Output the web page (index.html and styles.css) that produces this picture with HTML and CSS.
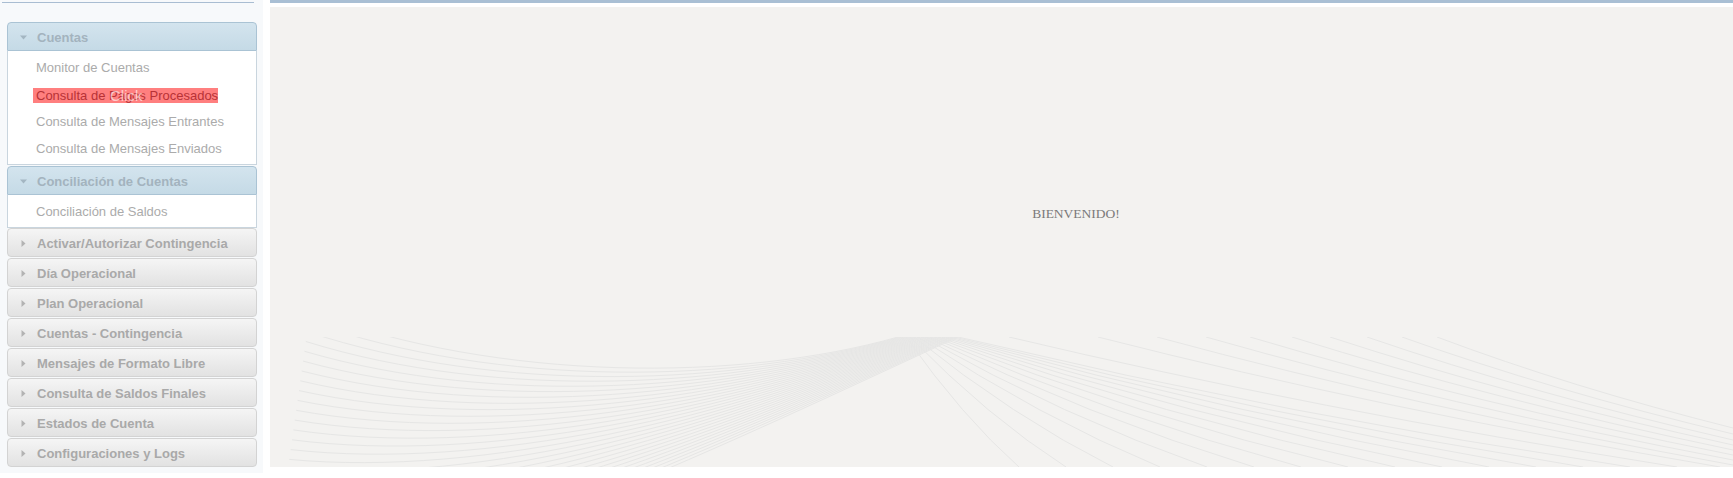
FILE: index.html
```html
<!DOCTYPE html>
<html lang="es">
<head>
<meta charset="utf-8">
<title>Bienvenido</title>
<link rel="stylesheet" href="styles.css">
</head>
<body>
<div class="page">
  <aside class="sidebar">
    <div class="top-rule"></div>
    <div class="accordion">
      <div class="acc-header active">
        <svg class="tri" width="7" height="7" viewBox="0 0 7 7"><polygon points="0,1.5 7,1.5 3.5,5.5"/></svg>
        <span>Cuentas</span>
      </div>
      <div class="acc-content">
        <div class="item">Monitor de Cuentas</div>
        <div class="item"><span class="hl">Consulta de Pagos Procesados<span class="click-tag">Click</span></span></div>
        <div class="item">Consulta de Mensajes Entrantes</div>
        <div class="item">Consulta de Mensajes Enviados</div>
      </div>
      <div class="acc-header active sep">
        <svg class="tri" width="7" height="7" viewBox="0 0 7 7"><polygon points="0,1.5 7,1.5 3.5,5.5"/></svg>
        <span>Conciliación de Cuentas</span>
      </div>
      <div class="acc-content">
        <div class="item">Conciliación de Saldos</div>
      </div>
      <div class="acc-header"><svg class="tri" width="7" height="7" viewBox="0 0 7 7"><polygon points="1.5,0 5.5,3.5 1.5,7"/></svg><span>Activar/Autorizar Contingencia</span></div>
      <div class="acc-header sep"><svg class="tri" width="7" height="7" viewBox="0 0 7 7"><polygon points="1.5,0 5.5,3.5 1.5,7"/></svg><span>Día Operacional</span></div>
      <div class="acc-header sep"><svg class="tri" width="7" height="7" viewBox="0 0 7 7"><polygon points="1.5,0 5.5,3.5 1.5,7"/></svg><span>Plan Operacional</span></div>
      <div class="acc-header sep"><svg class="tri" width="7" height="7" viewBox="0 0 7 7"><polygon points="1.5,0 5.5,3.5 1.5,7"/></svg><span>Cuentas - Contingencia</span></div>
      <div class="acc-header sep"><svg class="tri" width="7" height="7" viewBox="0 0 7 7"><polygon points="1.5,0 5.5,3.5 1.5,7"/></svg><span>Mensajes de Formato Libre</span></div>
      <div class="acc-header sep"><svg class="tri" width="7" height="7" viewBox="0 0 7 7"><polygon points="1.5,0 5.5,3.5 1.5,7"/></svg><span>Consulta de Saldos Finales</span></div>
      <div class="acc-header sep"><svg class="tri" width="7" height="7" viewBox="0 0 7 7"><polygon points="1.5,0 5.5,3.5 1.5,7"/></svg><span>Estados de Cuenta</span></div>
      <div class="acc-header sep"><svg class="tri" width="7" height="7" viewBox="0 0 7 7"><polygon points="1.5,0 5.5,3.5 1.5,7"/></svg><span>Configuraciones y Logs</span></div>
    </div>
  </aside>

  <main class="main">
    <div class="canvas">
      <div class="welcome">BIENVENIDO!</div>
      <svg class="wave" viewBox="0 0 1463 130" preserveAspectRatio="none">
        <g class="lines">
          <path d="M40,-25 C230,45 470,45 628,0"/>
          <path d="M38.6,-15.2 C229,51.4 469.3,47.2 630.1,0"/>
          <path d="M37.2,-5.3 C227.9,57.8 468.6,49.5 632.1,0"/>
          <path d="M35.9,4.5 C226.9,64.1 467.9,51.7 634.2,0"/>
          <path d="M34.5,14.3 C225.9,70.5 467.2,54 636.3,0"/>
          <path d="M33.1,24.1 C224.8,76.9 466.6,56.2 638.3,0"/>
          <path d="M31.7,34 C223.8,83.3 465.9,58.4 640.4,0"/>
          <path d="M30.3,43.8 C222.8,89.7 465.2,60.7 642.5,0"/>
          <path d="M29,53.6 C221.7,96 464.5,62.9 644.6,0"/>
          <path d="M27.6,63.4 C220.7,102.4 463.8,65.2 646.6,0"/>
          <path d="M26.2,73.3 C219.7,108.8 463.1,67.4 648.7,0"/>
          <path d="M24.8,83.1 C218.6,115.2 462.4,69.7 650.8,0"/>
          <path d="M23.4,92.9 C217.6,121.6 461.7,71.9 652.8,0"/>
          <path d="M22.1,102.8 C216.6,127.9 461,74.1 654.9,0"/>
          <path d="M20.7,112.6 C215.5,134.3 460.3,76.4 657,0"/>
          <path d="M19.3,122.4 C214.5,140.7 459.7,78.6 659,0"/>
          <path d="M17.9,132.2 C213.4,147.1 459,80.9 661.1,0"/>
          <path d="M16.6,142.1 C212.4,153.4 458.3,83.1 663.2,0"/>
          <path d="M15.2,151.9 C211.4,159.8 457.6,85.3 665.2,0"/>
          <path d="M13.8,161.7 C210.3,166.2 456.9,87.6 667.3,0"/>
          <path d="M12.4,171.6 C209.3,172.6 456.2,89.8 669.4,0"/>
          <path d="M11,181.4 C208.3,179 455.5,92.1 671.4,0"/>
          <path d="M9.7,191.2 C207.2,185.3 454.8,94.3 673.5,0"/>
          <path d="M8.3,201 C206.2,191.7 454.1,96.6 675.6,0"/>
          <path d="M6.9,210.9 C205.2,198.1 453.4,98.8 677.7,0"/>
          <path d="M5.5,220.7 C204.1,204.5 452.8,101 679.7,0"/>
          <path d="M4.1,230.5 C203.1,210.9 452.1,103.3 681.8,0"/>
          <path d="M2.8,240.3 C202.1,217.2 451.4,105.5 683.9,0"/>
          <path d="M1.4,250.2 C201,223.6 450.7,107.8 685.9,0"/>
          <path d="M0,260 C200,230 450,110 688,0"/>

          <path d="M636,0 Q692.5,80 749,130"/>
          <path d="M640,0 Q718,80 796,130"/>
          <path d="M644,0 Q743.5,80 843,130"/>
          <path d="M648,0 Q769,80 890,130"/>
          <path d="M652,0 Q794.5,80 937,130"/>
          <path d="M656,0 Q820,80 984,130"/>
          <path d="M660,0 Q845.5,80 1031,130"/>
          <path d="M664,0 Q871,80 1078,130"/>
          <path d="M668,0 Q896.5,80 1125,130"/>
          <path d="M672,0 Q922,80 1172,130"/>
          <path d="M676,0 Q947.5,80 1219,130"/>
          <path d="M680,0 Q973,80 1266,130"/>
          <path d="M684,0 Q998.5,80 1313,130"/>
          <path d="M688,0 Q1024,80 1360,130"/>

          <path d="M739,0 Q1039.6,71.5 1407,130"/>
          <path d="M828,0 Q1107.9,71.5 1450,130"/>
          <path d="M887,0 Q1146.2,70.4 1463,128"/>
          <path d="M936,0 Q1173.2,67.7 1463,123"/>
          <path d="M980,0 Q1197.4,64.9 1463,118"/>
          <path d="M1022,0 Q1220.5,62.2 1463,113"/>
          <path d="M1060,0 Q1241.4,59.4 1463,108"/>
          <path d="M1097,0 Q1261.7,56.7 1463,103"/>
          <path d="M1132,0 Q1281,53.4 1463,97"/>
          <path d="M1167,0 Q1300.2,50.1 1463,91"/>
        </g>
      </svg>
    </div>
  </main>
</div>
</body>
</html>
```

FILE: styles.css
```css
html, body {
  margin: 0;
  padding: 0;
  background: #ffffff;
}

body {
  font-family: "Liberation Sans", Arial, sans-serif;
  font-size: 13px;
  overflow: hidden;
}

.page {
  display: flex;
  align-items: flex-start;
  width: 1733px;
  height: 478px;
}

/* ---------- Sidebar ---------- */
.sidebar {
  width: 263px;
  flex: 0 0 263px;
  background: #f7f9fb;
  padding-bottom: 6px;
  box-sizing: border-box;
}

.top-rule {
  margin: 2px 9px 0 2px;
  border-top: 1px solid #a9bdd2;
}

.accordion {
  margin: 19px 6px 0 7px;
  width: 250px;
}

.acc-header {
  height: 29px;
  box-sizing: border-box;
  display: flex;
  align-items: center;
  gap: 10px;
  padding: 1px 0 0 12px;
  border: 1px solid #d3d3d3;
  border-radius: 4px;
  background: linear-gradient(#f5f5f5, #e2e2e2);
  color: #a9a9a9;
  font-weight: bold;
  font-size: 13px;
}

.acc-header.sep {
  margin-top: 1px;
}

.acc-header .tri {
  flex: 0 0 7px;
  fill: #b3b3b3;
}

.acc-header.active {
  border-color: #aac3d4;
  border-radius: 4px 4px 0 0;
  background: linear-gradient(#d3e4ee, #c5dae6);
  color: #a3b3be;
}

.acc-header.active .tri {
  fill: #a4b6c2;
}

.acc-content {
  background: #ffffff;
  border: 1px solid #c9d5de;
  border-top: none;
  padding: 3px 0 2px 28px;
}

.item {
  height: 27px;
  line-height: 27px;
  color: #ababab;
  white-space: nowrap;
}

.hl {
  position: relative;
  display: inline-block;
  width: 182px;
  height: 15px;
  line-height: 15px;
  margin-left: -3px;
  padding-left: 3px;
  background: #ff7f7f;
  color: #b83236;
  white-space: nowrap;
  vertical-align: middle;
}

.click-tag {
  position: absolute;
  left: 77px;
  top: -1px;
  font-size: 15px;
  line-height: 17px;
  color: rgba(255, 255, 255, 0.6);
}

/* ---------- Main ---------- */
.main {
  flex: 1;
  margin-left: 7px;
  border-top: 3px solid #a9bfd4;
  padding-top: 4px;
}

.canvas {
  height: 460px;
  background: #f3f2f0;
  display: flex;
  flex-direction: column;
}

.welcome {
  flex: 1;
  padding: 199px 0 0 149px;
  text-align: center;
  font-family: "Liberation Serif", "Times New Roman", serif;
  font-size: 13.5px;
  line-height: 16px;
  color: #7a7a7a;
}

.wave {
  display: block;
  width: 100%;
  height: 130px;
  flex: 0 0 130px;
}

.wave .lines path {
  fill: none;
  stroke: #e6e6e5;
  stroke-width: 1;
}
```
